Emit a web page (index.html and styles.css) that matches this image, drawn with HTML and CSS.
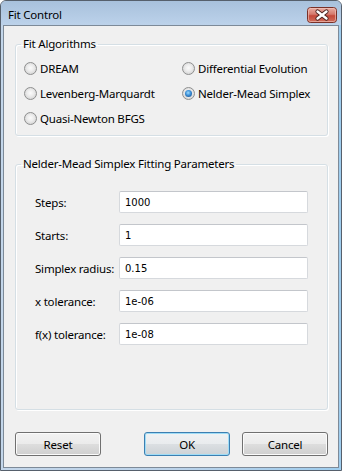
FILE: index.html
```html
<!DOCTYPE html>
<html>
<head>
<meta charset="utf-8">
<link rel="stylesheet" href="styles.css">
</head>
<body>
<div class="window">
  <div class="titlebar">
    <span class="title">Fit Control</span>
    <div class="close">
      <svg width="30" height="16" viewBox="0 0 30 16">
        <defs>
          <linearGradient id="cg" x1="0" y1="0" x2="0" y2="1">
            <stop offset="0" stop-color="#eab0a6"/>
            <stop offset="0.45" stop-color="#d57a6d"/>
            <stop offset="0.55" stop-color="#c4493a"/>
            <stop offset="1" stop-color="#d0705e"/>
          </linearGradient>
        </defs>
        <rect x="0.5" y="0.5" width="29" height="15" rx="3" fill="url(#cg)" stroke="#7a3128"/>
        <rect x="1.5" y="1.5" width="27" height="13" rx="2" fill="none" stroke="#f3c8c0" stroke-opacity="0.6"/>
        <path d="M10.5 4.5 L19.5 11.5 M19.5 4.5 L10.5 11.5" stroke="#4a2420" stroke-width="4.2" stroke-linecap="round"/>
        <path d="M10.5 4.5 L19.5 11.5 M19.5 4.5 L10.5 11.5" stroke="#ffffff" stroke-width="2.4" stroke-linecap="round"/>
      </svg>
    </div>
  </div>
  <div class="frame">
    <div class="client">
      <fieldset class="group algos">
        <legend>Fit Algorithms</legend>
        <div class="radios">
          <div class="opt"><span class="radio"></span><span>DREAM</span></div>
          <div class="opt"><span class="radio"></span><span>Differential Evolution</span></div>
          <div class="opt"><span class="radio"></span><span>Levenberg-Marquardt</span></div>
          <div class="opt"><span class="radio on"></span><span>Nelder-Mead Simplex</span></div>
          <div class="opt"><span class="radio"></span><span>Quasi-Newton BFGS</span></div>
        </div>
      </fieldset>
      <fieldset class="group params">
        <legend>Nelder-Mead Simplex Fitting Parameters</legend>
        <div class="form">
          <span class="lbl">Steps:</span><div class="field">1000</div>
          <span class="lbl">Starts:</span><div class="field">1</div>
          <span class="lbl">Simplex radius:</span><div class="field">0.15</div>
          <span class="lbl">x tolerance:</span><div class="field">1e-06</div>
          <span class="lbl">f(x) tolerance:</span><div class="field">1e-08</div>
        </div>
      </fieldset>
      <div class="buttons">
        <div class="btn">Reset</div>
        <div class="spacer"></div>
        <div class="btn default">OK</div>
        <div class="btn">Cancel</div>
      </div>
    </div>
  </div>
</div>
</body>
</html>
```
FILE: styles.css
```css
html, body {
  margin: 0;
  padding: 0;
  background: #ffffff;
}
body {
  font-family: "Noto Sans", "Open Sans", sans-serif;
  font-size: 11.5px;
  letter-spacing: -0.2px;
  color: #000;
}
.window {
  width: 342px;
  height: 471px;
  box-sizing: border-box;
  border: 1px solid #56606c;
  border-radius: 6px 6px 0 0;
  background: #bfd4ea;
  display: flex;
  flex-direction: column;
  overflow: hidden;
}
.titlebar {
  height: 24px;
  box-sizing: border-box;
  padding: 6px 4px 0 7px;
  display: flex;
  justify-content: space-between;
  align-items: flex-start;
  background: linear-gradient(#a8c1dc, #bcd2ea);
}
.title {
  line-height: 16px;
}
.close {
  width: 30px;
  height: 16px;
  display: flex;
}
.frame {
  flex: 1;
  display: flex;
  padding: 0 2px 2px 2px;
  background: linear-gradient(90deg, #c3d6ea, #bcd3ea 50%, #9fcdee);
}
.client {
  flex: 1;
  border: 1px solid #7d8a98;
  background: #f0f0f0;
  display: flex;
  flex-direction: column;
}
.group {
  border: 1px solid #d5dfe5;
  border-radius: 3px;
  box-shadow: 1px 1px 0 #ffffff, inset 1px 1px 0 #ffffff;
  margin: 0 10px 0 11px;
  padding: 0;
  min-width: 0;
}
.group legend {
  line-height: 16px;
  padding: 0 2px;
  margin-left: 5px;
}
.algos {
  margin-top: 10px;
}
.radios {
  display: grid;
  grid-template-columns: 158px 1fr;
  grid-auto-rows: 25px;
  padding: 4px 8px;
}
.opt {
  display: flex;
  align-items: center;
  gap: 3px;
  white-space: nowrap;
}
.radio {
  width: 13px;
  height: 13px;
  box-sizing: border-box;
  border-radius: 50%;
  border: 1px solid #8e8f8f;
  background: radial-gradient(circle at 50% 45%, #fbfbfb 0, #ececec 40%, #c8c8c8 100%);
  display: flex;
  align-items: center;
  justify-content: center;
  flex: none;
}
.radio.on::after {
  content: "";
  width: 7px;
  height: 7px;
  border-radius: 50%;
  background: radial-gradient(circle at 45% 40%, #9ddcff 0, #3b8ed6 45%, #13427a 100%);
}
.params {
  margin-top: 20px;
  flex: 1;
}
.form {
  display: grid;
  grid-template-columns: 84px 1fr;
  grid-auto-rows: 22px;
  row-gap: 11px;
  padding: 19px 19px 0 19px;
}
.lbl {
  display: flex;
  align-items: center;
  white-space: nowrap;
}
.field {
  box-sizing: border-box;
  border: 1px solid #d6d9dd;
  border-top-color: #c3c6cb;
  border-radius: 2px;
  background: #ffffff;
  padding-left: 5px;
  display: flex;
  align-items: center;
  font-family: "DejaVu Sans", sans-serif;
  font-size: 10px;
  letter-spacing: 0;
}
.buttons {
  display: flex;
  gap: 12px;
  padding: 22px 10px 11px 11px;
}
.spacer {
  flex: 1;
}
.btn {
  width: 86px;
  height: 24px;
  box-sizing: border-box;
  border: 1px solid #707070;
  border-radius: 3px;
  background: linear-gradient(#f2f2f2 0%, #ebebeb 48%, #dddddd 52%, #cfcfcf 100%);
  box-shadow: inset 0 0 0 1px #fbfbfb;
  display: flex;
  align-items: center;
  justify-content: center;
}
.btn.default {
  border-color: #3c7fb1;
  box-shadow: inset 0 0 0 1px #9fdcf6;
  background: linear-gradient(#f0f2f3 0%, #e9ecee 48%, #dbdfe2 52%, #cdd2d6 100%);
}
```
